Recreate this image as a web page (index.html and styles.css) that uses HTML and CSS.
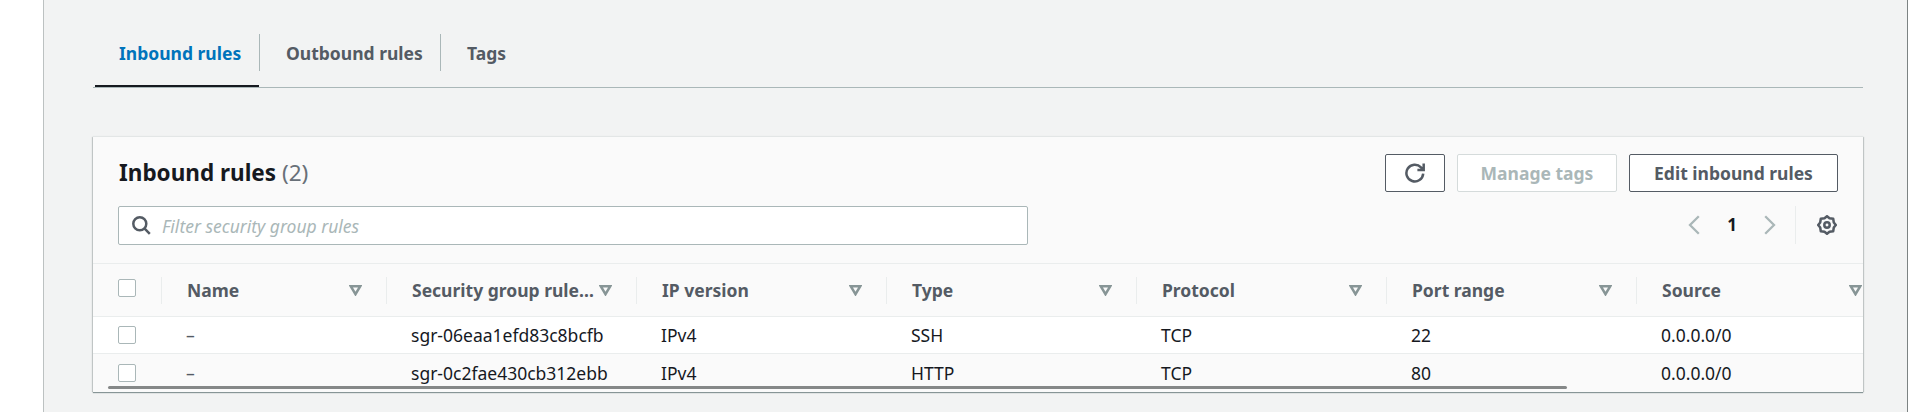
FILE: index.html
```html
<!DOCTYPE html>
<html lang="en">
<head>
<meta charset="utf-8">
<title>Inbound rules</title>
<link rel="stylesheet" href="styles.css">
</head>
<body>
<div class="app">
  <aside class="side"></aside>
  <main class="main">
    <nav class="tabs">
      <a class="tab active"><span class="t1">Inbound rules</span></a>
      <a class="tab"><span class="t2">Outbound rules</span></a>
      <a class="tab"><span class="t3">Tags</span></a>
    </nav>
    <section class="panel">
      <div class="head">
        <h2><span class="title">Inbound rules</span> <span class="count">(2)</span></h2>
        <div class="actions">
          <button class="btn refresh"><svg width="20" height="20" viewBox="0 0 20 20"><path d="M18.2 10.7a8.4 8.4 0 1 1-2.2-6.3l2.2 2.2M18.7 .6v6.3h-6.3" /></svg></button>
          <button class="btn manage"><span>Manage tags</span></button>
          <button class="btn edit"><span>Edit inbound rules</span></button>
        </div>
      </div>
      <div class="filter">
        <label class="search"><svg width="19" height="19" viewBox="0 0 19 19"><circle cx="7.8" cy="7.8" r="6.5"/><path d="M12.4 12.4l5.4 5.4"/></svg><span>Filter security group rules</span></label>
        <div class="pager">
          <svg class="chev" width="12" height="20" viewBox="0 0 12 20"><path d="M10.8 1.2L2 10l8.800 8.800"/></svg>
          <b>1</b>
          <svg class="chev next" width="12" height="20" viewBox="0 0 12 20"><path d="M1.200 1.200L10 10l-8.800 8.800"/></svg>
          <span class="gearbox"><svg class="gear" width="20" height="20" viewBox="0 0 20 20"><path d="M10 1.200L12.500 3.200L16.200 3.800L16.800 7.500L18.800 10L16.800 12.500L16.200 16.200L12.500 16.800L10 18.800L7.500 16.800L3.800 16.200L3.200 12.500L1.200 10L3.200 7.500L3.800 3.800L7.500 3.200Z"/><circle cx="10" cy="10" r="2.700"/></svg></span>
        </div>
      </div>
      <div class="table">
        <div class="row hdr">
          <div class="sel"><i class="box"></i></div>
          <div class="cell name"><span class="h1">Name</span><svg class="sort" width="13" height="11" viewBox="0 0 13 11"><path d="M1.700 1.200h9.600L6.500 9.200z"/></svg></div>
          <div class="cell"><span class="h2">Security group rule…</span><svg class="sort" width="13" height="11" viewBox="0 0 13 11"><path d="M1.700 1.200h9.600L6.500 9.200z"/></svg></div>
          <div class="cell"><span class="h3">IP version</span><svg class="sort" width="13" height="11" viewBox="0 0 13 11"><path d="M1.700 1.200h9.600L6.500 9.200z"/></svg></div>
          <div class="cell"><span class="h4">Type</span><svg class="sort" width="13" height="11" viewBox="0 0 13 11"><path d="M1.700 1.200h9.600L6.500 9.200z"/></svg></div>
          <div class="cell"><span class="h5">Protocol</span><svg class="sort" width="13" height="11" viewBox="0 0 13 11"><path d="M1.700 1.200h9.600L6.500 9.200z"/></svg></div>
          <div class="cell"><span class="h6">Port range</span><svg class="sort" width="13" height="11" viewBox="0 0 13 11"><path d="M1.700 1.200h9.600L6.500 9.200z"/></svg></div>
          <div class="cell"><span class="h7">Source</span><svg class="sort" width="13" height="11" viewBox="0 0 13 11"><path d="M1.700 1.200h9.600L6.500 9.200z"/></svg></div>
        </div>
        <div class="row one">
          <div class="sel"><i class="box"></i></div>
          <div class="cell name"><span class="dash">–</span></div>
          <div class="cell"><span class="id1">sgr-06eaa1efd83c8bcfb</span></div>
          <div class="cell"><span class="ip">IPv4</span></div>
          <div class="cell"><span class="ty">SSH</span></div>
          <div class="cell"><span class="tcp">TCP</span></div>
          <div class="cell"><span class="port">22</span></div>
          <div class="cell"><span class="src">0.0.0.0/0</span></div>
        </div>
        <div class="row two">
          <div class="sel"><i class="box"></i></div>
          <div class="cell name"><span class="dash">–</span></div>
          <div class="cell"><span class="id2">sgr-0c2fae430cb312ebb</span></div>
          <div class="cell"><span class="ip">IPv4</span></div>
          <div class="cell"><span class="ty">HTTP</span></div>
          <div class="cell"><span class="tcp">TCP</span></div>
          <div class="cell"><span class="port">80</span></div>
          <div class="cell"><span class="src">0.0.0.0/0</span></div>
        </div>
        <div class="scrollbar"></div>
      </div>
    </section>
  </main>
</div>
</body>
</html>
```
FILE: styles.css
```css
* { box-sizing: border-box; }
body { margin: 0; background: #f2f3f3; font-family: "Noto Sans", sans-serif; font-size: 17.5px; line-height: 24px; color: #16191f; overflow: hidden; }
svg { display: block; flex: none; fill: none; stroke: #545b64; stroke-width: 2.5; }
span { white-space: nowrap; }
.app { display: flex; height: 412px; border-right: 1px solid #7d8383; }
.side { width: 44px; background: #fff; border-right: 1px solid #bcc1c1; flex: none; }
.main { flex: 1; padding: 18px 44px 0 49px; min-width: 0; }
.tabs { height: 70px; border-bottom: 1px solid #aab7b8; display: flex; }
.tab { font-weight: 700; color: #545b64; height: 37px; margin-top: 16px; padding: 7px 25px 0 26px; border-right: 1px solid #aab7b8; width: 181px; }
.tab.active { width: 164px; margin-left: 2px; padding-left: 24px; color: #0073bb; height: 53px; border-right: 0; border-bottom: 2px solid #16191f; }
.tab.active + .tab { border-left: 1px solid #aab7b8; width: 182px; }
.tab:last-child { border: 0; }
.panel { margin-top: 49px; height: 255px; background: #fafafa; box-shadow: 0 -1px 1px #e3e6e6, 0 1px 1px #879596, -1px 0 1px #c3c8c8, 1px 0 1px #c3c8c8; overflow: hidden; }
.head { display: flex; justify-content: space-between; padding: 17px 25px 0 26px; height: 69px; }
h2 { margin: 4px 0 0; font-size: 22.5px; line-height: 30px; }
.count { font-weight: 400; color: #687078; }
.actions { display: flex; gap: 12px; }
.btn { height: 38px; font: 700 17.5px/24px "Noto Sans", sans-serif; color: #545b64; background: #fff; border: 1px solid #545b64; border-radius: 2px; padding: 0; display: flex; align-items: center; justify-content: center; }
.refresh { width: 60px; }
.manage { width: 160px; color: #aab7b8; border-color: #d5dbdb; }
.edit { width: 209px; }
.filter { height: 57px; display: flex; justify-content: space-between; padding: 0 26px 0 25px; }
.search { width: 910px; height: 39px; background: #fff; border: 1px solid #aab7b8; border-radius: 2px; display: flex; align-items: center; padding-left: 13px; gap: 11px; color: #aab7b8; font-style: italic; }
.pager { display: flex; align-items: center; height: 38px; font-size: 17px; }
.pager b { margin: 0 27px; width: 10px; text-align: center; }
.chev { stroke: #aab7b8; stroke-width: 2.3; }
.gearbox { height: 38px; margin-left: 19px; padding-left: 21px; border-left: 1px solid #eaeded; display: flex; align-items: center; }
.gear { stroke-linejoin: round; }
.table { border-top: 1px solid #eaeded; height: 129px; }
.row { display: flex; width: 1800px; }
.sel { width: 68px; padding-left: 25px; flex: none; }
.box { display: block; width: 18px; height: 18px; border: 1.500px solid #aab7b8; border-radius: 2px; background: #fff; }
.cell { width: 250px; flex: none; }
.name { width: 225px; }
.hdr { height: 53px; border-bottom: 1px solid #eaeded; padding-top: 13px; font-weight: 700; color: #545b64; }
.hdr .sel { padding-top: 2px; }
.hdr .cell { height: 27px; border-left: 1px solid #eaeded; padding: 1px 24px 0 25px; display: flex; justify-content: space-between; }
.sort { margin-top: 7px; stroke: #879596; }
.one { height: 37px; background: #fff; border-bottom: 1px solid #eaeded; }
.row .cell span { display: block; }
.one .cell, .two .cell { padding: 6px 0 0 25px; }
.one .sel { padding-top: 9px; }
.two { height: 38px; }
.two .cell { padding-top: 7px; }
.two .sel { padding-top: 10px; }
.dash { color: #545b64; }
.scrollbar { position: relative; top: -6px; margin-left: 15px; width: 1459px; height: 3px; border-radius: 2px; background: #858888; }
```
